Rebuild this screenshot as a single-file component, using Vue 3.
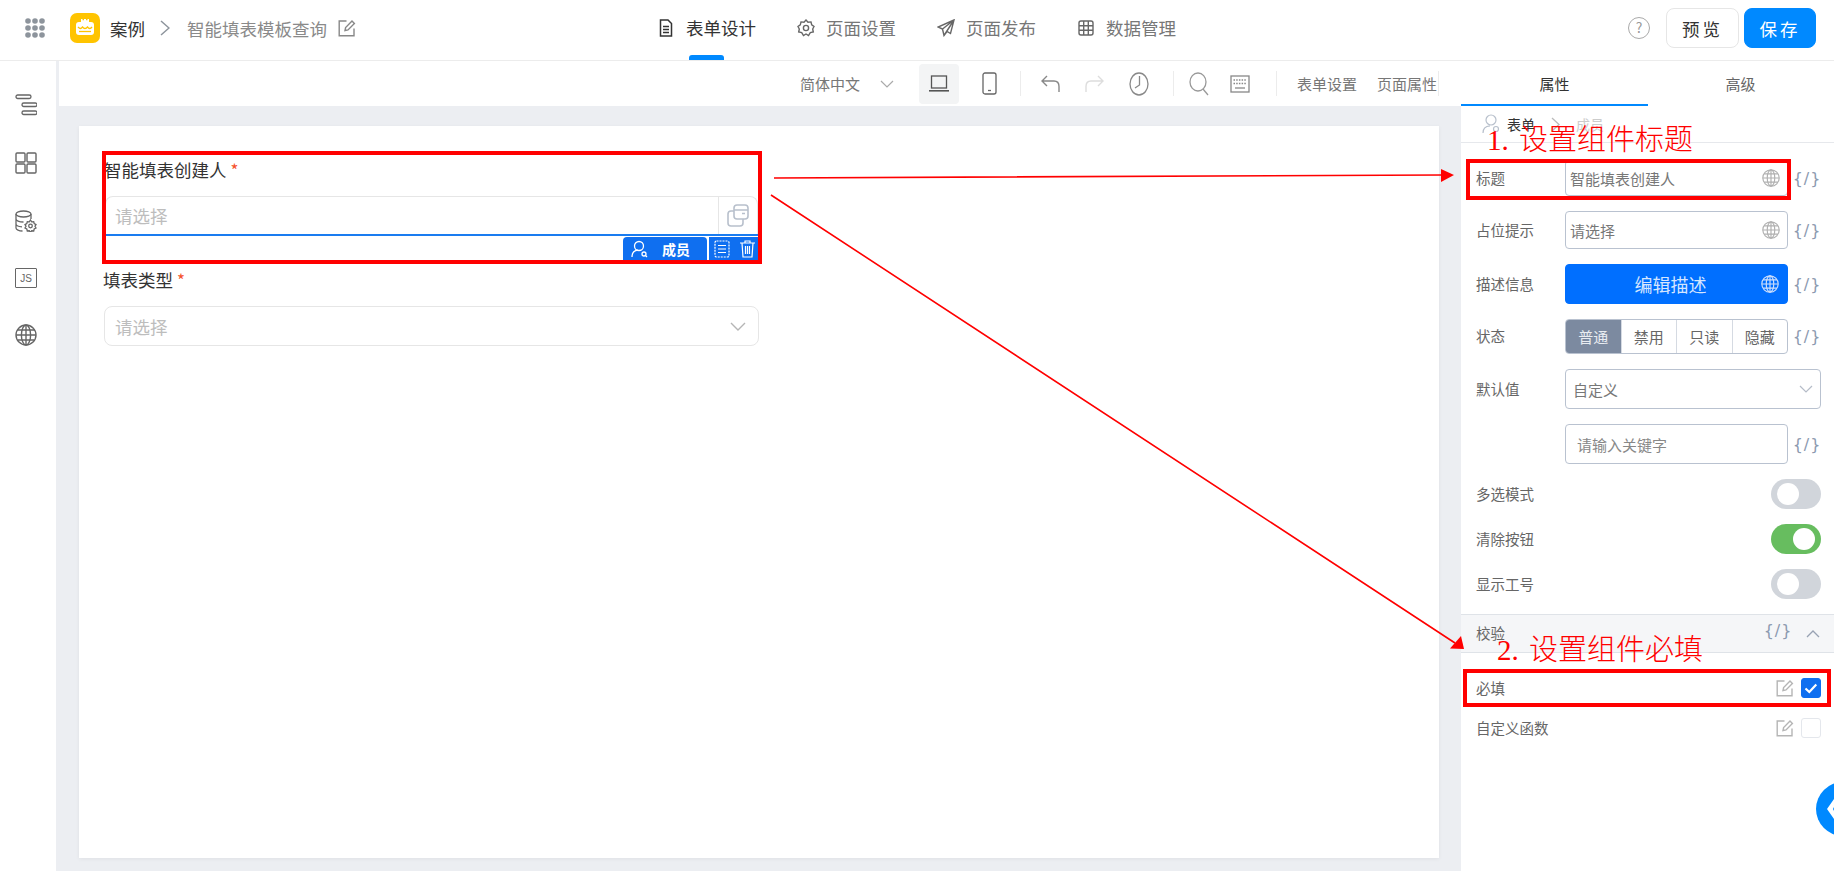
<script setup>
const toggles = [
  { label: '多选模式', on: false },
  { label: '清除按钮', on: true },
  { label: '显示工号', on: false },
]
const segs = ['普通', '禁用', '只读', '隐藏']
</script>

<template>
  <div class="app">
    <svg class="defs" width="0" height="0">
      <defs>
        <symbol id="globe" viewBox="0 0 22 22">
          <g fill="none" stroke="currentColor" stroke-width="1.4">
            <circle cx="11" cy="11" r="10" />
            <ellipse cx="11" cy="11" rx="4.6" ry="10" />
            <path d="M11 1v20M1 11h20M2.6 6h16.8M2.6 16h16.8" />
          </g>
        </symbol>
        <symbol id="edit" viewBox="0 0 18 18">
          <g fill="none" stroke="currentColor" stroke-width="1.4">
            <path d="M8.5 2H1.2v14.8H16V9.5" />
            <path d="M7 11.5l.6-3L14 2l2.4 2.4-6.4 6.5z" />
          </g>
        </symbol>
      </defs>
    </svg>

    <header class="topbar">
      <div class="h-left">
        <svg class="dots" width="20" height="20" viewBox="0 0 20 20" fill="#8d949c">
          <circle cx="3" cy="3" r="2.8" /><circle cx="10" cy="3" r="2.8" /><circle cx="17" cy="3" r="2.8" />
          <circle cx="3" cy="10" r="2.8" /><circle cx="10" cy="10" r="2.8" /><circle cx="17" cy="10" r="2.8" />
          <circle cx="3" cy="17" r="2.8" /><circle cx="10" cy="17" r="2.8" /><circle cx="17" cy="17" r="2.8" />
        </svg>
        <div class="logo">
          <svg width="30" height="30" viewBox="0 0 30 30">
            <path d="M11 9V6h1.500v1.200H14V6h2v1.200h1.500V6H19v3z" fill="#fff" />
            <rect x="6" y="9" width="18" height="13" rx="3" fill="#fff" />
            <path d="M8 14c2 2 3 2 4.500 0 1.500 2 3.500 2 5 0 1.500 2 3 2 4.500 0" fill="none" stroke="#ffc400" stroke-width="1.300" />
            <path d="M9 18.500h12" stroke="#ffc400" stroke-width="1.300" />
          </svg>
        </div>
        <span class="app-name">案例</span>
        <svg class="crumb" width="10" height="16" viewBox="0 0 10 16"><path d="M1 1l8 7-8 7" fill="none" stroke="#8d949c" stroke-width="1.500" /></svg>
        <span class="page-name">智能填表模板查询</span>
        <svg class="page-edit" width="18" height="18" viewBox="0 0 18 18"><use href="#edit" /></svg>
      </div>

      <nav class="nav">
        <div class="nav-item active">
          <svg width="18" height="18" viewBox="0 0 18 18" fill="none" stroke="#333" stroke-width="1.500"><path d="M3.500 1h7.500l3.500 3.500V17h-11zM6 7.500h6M6 10.500h6M6 13.500h6" /></svg>
          <span>表单设计</span>
          <i class="nav-line"></i>
        </div>
        <div class="nav-item">
          <svg width="18" height="18" viewBox="0 0 18 18" fill="none" stroke="#666" stroke-width="1.400"><path d="M9 1l2 2.200 3-.3.700 2.900 2.300 1.700L15.700 10l.6 3-3 .6L11.500 16.500 9 15l-2.500 1.500-1.800-2.900-3-.6.600-3L1 7.500l2.300-1.700L4 2.900l3 .3z" /><circle cx="9" cy="9" r="2.600" /></svg>
          <span>页面设置</span>
        </div>
        <div class="nav-item">
          <svg width="18" height="18" viewBox="0 0 18 18" fill="none" stroke="#666" stroke-width="1.400"><path d="M17 1L1 8l4.500 2L7 16.500l3-4 3.500 2zM5.500 10L17 1 7 16.500" /></svg>
          <span>页面发布</span>
        </div>
        <div class="nav-item">
          <svg width="18" height="18" viewBox="0 0 18 18" fill="none" stroke="#666" stroke-width="1.400"><rect x="2" y="2" width="14" height="14" rx="2" /><path d="M2 6.700h14M2 11.300h14M6.700 2v14M11.300 2v14" /></svg>
          <span>数据管理</span>
        </div>
      </nav>

      <div class="h-right">
        <div class="help">?</div>
        <button class="btn">预览</button>
        <button class="btn primary">保存</button>
      </div>
    </header>

    <div class="body">
      <aside class="sidebar">
        <svg width="22" height="22" viewBox="0 0 22 22" fill="none" stroke="#666" stroke-width="1.300">
          <rect x="1" y="1" width="15" height="3.500" rx="1.700" />
          <rect x="7" y="9" width="15" height="3.500" rx="1.700" />
          <rect x="7" y="17" width="15" height="3.500" rx="1.700" />
        </svg>
        <svg width="22" height="22" viewBox="0 0 22 22" fill="none" stroke="#666" stroke-width="1.400">
          <rect x="1" y="1" width="9" height="9" rx="1" /><rect x="12" y="1" width="9" height="9" rx="1" />
          <rect x="1" y="12" width="9" height="9" rx="1" /><rect x="12" y="12" width="9" height="9" rx="1" />
        </svg>
        <svg width="22" height="22" viewBox="0 0 22 22" fill="none" stroke="#666" stroke-width="1.300">
          <ellipse cx="8.500" cy="4" rx="7.500" ry="3" />
          <path d="M1 4v14c0 1.600 3 3 6.500 3M16 4v5M1 9c0 1.500 3 3 7.500 3M1 14c0 1.500 3 2.600 6 2.800" />
          <path d="M15.500 10l1.200 1.800 2-.2.500 2 1.800 1-1 1.700 1 1.700-1.800 1-.5 2-2-.2-1.200 1.500-1.200-1.500-2 .2-.5-2-1.800-1 1-1.700-1-1.700 1.800-1 .5-2 2 .2z" />
          <circle cx="15.500" cy="16" r="1.800" />
        </svg>
        <div class="js"><span>JS</span></div>
        <svg class="side-globe" width="22" height="22" viewBox="0 0 22 22"><use href="#globe" /></svg>
      </aside>

      <main class="center">
        <div class="toolbar">
          <span class="tool-text">简体中文</span>
          <svg class="m20" width="14" height="8" viewBox="0 0 14 8"><path d="M1 1l6 6 6-6" fill="none" stroke="#aaa" stroke-width="1.200" /></svg>
          <div class="tool on m25">
            <svg width="20" height="17" viewBox="0 0 20 17" fill="none" stroke="#555" stroke-width="1.300"><rect x="2.500" y="1" width="15" height="12" /><path d="M0 15.800h20" stroke-width="1.600" /></svg>
          </div>
          <div class="tool m10">
            <svg width="15" height="23" viewBox="0 0 15 23" fill="none" stroke="#666" stroke-width="1.300"><rect x="1" y="1" width="13" height="21" rx="2" /><path d="M6 18.500h3" /></svg>
          </div>
          <i class="tool-sep m11"></i>
          <div class="tool m10">
            <svg width="20" height="18" viewBox="0 0 20 18" fill="none" stroke="#888" stroke-width="1.400"><path d="M6 1L1 6l5 5M1 6h12c3.500 0 5 2.500 5 5.500V17" /></svg>
          </div>
          <div class="tool m3">
            <svg width="20" height="18" viewBox="0 0 20 18" fill="none" stroke="#ddd" stroke-width="1.400"><path d="M14 1l5 5-5 5M19 6H7c-3.500 0-5 2.500-5 5.500V17" /></svg>
          </div>
          <div class="tool m5">
            <svg width="20" height="24" viewBox="0 0 20 24" fill="none" stroke="#888" stroke-width="1.300"><ellipse cx="10" cy="12" rx="9" ry="11" /><path d="M10.500 4v9L6 16" /></svg>
          </div>
          <i class="tool-sep m14"></i>
          <div class="tool m5">
            <svg width="20" height="24" viewBox="0 0 20 24" fill="none" stroke="#999" stroke-width="1.300"><ellipse cx="9" cy="10" rx="8" ry="9" /><path d="M14 17l5 6" /></svg>
          </div>
          <div class="tool m1">
            <svg width="20" height="18" viewBox="0 0 20 18" fill="none" stroke="#888" stroke-width="1.300"><rect x="1" y="1" width="18" height="16" /><path d="M3.500 5h13M3.500 8.500h13" stroke-dasharray="1.500 1.200" /><path d="M5 13h10" /></svg>
          </div>
          <i class="tool-sep m16"></i>
          <span class="tool-text m20">表单设置</span>
          <span class="tool-text m20">页面属性</span>
          <i class="tool-sep m1"></i>
        </div>

        <div class="canvas">
          <div class="paper">
            <div class="field selected">
              <div class="f-label">智能填表创建人 <b>*</b></div>
              <div class="f-input member">
                <span>请选择</span>
                <div class="addon">
                  <svg width="22" height="23" viewBox="0 0 22 23" fill="none" stroke="#b8c0cc" stroke-width="1.600">
                    <rect x="7" y="1" width="14" height="14" rx="3" />
                    <path d="M7 6h14M15 9.500h3" />
                    <path d="M7 7H4a3 3 0 0 0-3 3v9a3 3 0 0 0 3 3h9a3 3 0 0 0 3-3v-4" />
                  </svg>
                </div>
              </div>
              <div class="field-tools">
                <div class="badge">
                  <svg width="17" height="18" viewBox="0 0 17 18" fill="none" stroke="#fff" stroke-width="1.300"><circle cx="8" cy="6" r="4.500" /><path d="M1 17c0-4 2.500-6.500 6-6.800" /><circle cx="13" cy="14" r="2" /><path d="M14.500 15.500L16 17" /></svg>
                  <span>成员</span>
                </div>
                <div class="tool-icons">
                  <svg width="16" height="18" viewBox="0 0 16 18" fill="none" stroke="#fff" stroke-width="1.200"><rect x="1" y="1" width="14" height="16" rx="1.500" stroke-dasharray="2 1" /><path d="M4 5.500h8M4 9h8M4 12.500h8" /></svg>
                  <svg width="15" height="18" viewBox="0 0 15 18" fill="none" stroke="#fff" stroke-width="1.200"><path d="M0 3h15M5 3V1h5v2M2 3l1 14h9l1-14M5.500 6v8M7.500 6v8M9.500 6v8" /></svg>
                </div>
              </div>
            </div>

            <div class="field second">
              <div class="f-label">填表类型 <b>*</b></div>
              <div class="f-input select">
                <span>请选择</span>
                <svg width="16" height="9" viewBox="0 0 16 9"><path d="M1 1l7 7 7-7" fill="none" stroke="#b5b5b5" stroke-width="1.400" /></svg>
              </div>
            </div>
          </div>
        </div>
      </main>

      <aside class="panel">
        <div class="tabs">
          <div class="tab active">属性</div>
          <div class="tab">高级</div>
        </div>
        <div class="p-crumb">
          <svg width="18" height="20" viewBox="0 0 18 20" fill="none" stroke="#b8c0cc" stroke-width="1.200"><circle cx="9" cy="6" r="5" /><path d="M1 19c0-4.500 3-7 7-7.200" /><circle cx="14" cy="15" r="2.500" /></svg>
          <span class="c1">表单</span>
          <svg width="9" height="15" viewBox="0 0 9 15"><path d="M1 1l7 6.500-7 6.500" fill="none" stroke="#bbb" stroke-width="1.300" /></svg>
          <span class="c2">成员</span>
        </div>

        <div class="props">
          <div class="prow r36">
            <label>标题</label>
            <div class="ctrl"><span class="val">智能填表创建人</span><svg class="g" width="18" height="18"><use href="#globe" /></svg></div>
            <span class="code">{/}</span>
          </div>
          <div class="prow r38">
            <label>占位提示</label>
            <div class="ctrl"><span class="val">请选择</span><svg class="g" width="18" height="18"><use href="#globe" /></svg></div>
            <span class="code">{/}</span>
          </div>
          <div class="prow r40">
            <label>描述信息</label>
            <div class="ctrl blue"><span>编辑描述</span><svg class="g" width="18" height="18"><use href="#globe" /></svg></div>
            <span class="code">{/}</span>
          </div>
          <div class="prow r35">
            <label>状态</label>
            <div class="segs">
              <span v-for="(s, i) in segs" :key="s" class="seg" :class="{ active: i === 0 }">{{ s }}</span>
            </div>
            <span class="code">{/}</span>
          </div>
          <div class="prow r40">
            <label>默认值</label>
            <div class="ctrl wide"><span class="val">自定义</span><svg width="14" height="8" viewBox="0 0 14 8"><path d="M1 1l6 6 6-6" fill="none" stroke="#b5bcc8" stroke-width="1.200" /></svg></div>
          </div>
          <div class="prow r40">
            <label></label>
            <div class="ctrl"><span class="val kw">请输入关键字</span></div>
            <span class="code">{/}</span>
          </div>
          <div v-for="t in toggles" :key="t.label" class="prow r30 between">
            <label>{{ t.label }}</label>
            <div class="switch" :class="{ on: t.on }"><i></i></div>
          </div>
        </div>

        <div class="sec">
          <span class="sec-title">校验</span>
          <span class="code sec-code">{/}</span>
          <svg width="14" height="8" viewBox="0 0 14 8"><path d="M1 7l6-6 6 6" fill="none" stroke="#98a2b3" stroke-width="1.300" /></svg>
        </div>
        <div class="checks">
          <div class="crow">
            <label>必填</label>
            <svg class="e" width="18" height="18"><use href="#edit" /></svg>
            <div class="cb on"><svg width="14" height="11" viewBox="0 0 14 11"><path d="M1.500 5.500l3.800 3.500 7-7.500" fill="none" stroke="#fff" stroke-width="2.200" /></svg></div>
          </div>
          <div class="crow">
            <label>自定义函数</label>
            <svg class="e" width="18" height="18"><use href="#edit" /></svg>
            <div class="cb"></div>
          </div>
        </div>
        <div class="float">
          <svg width="12" height="22" viewBox="0 0 12 22"><path d="M8 1L1 11l7 10 3-2-4-8 4-8z" fill="#fff" /></svg>
        </div>
      </aside>
    </div>

    <!-- annotations drawn over the screenshot -->
    <div class="mark m-a"></div>
    <div class="mark m-b"></div>
    <div class="mark m-c"></div>
    <div class="note n-a">1. 设置组件标题</div>
    <div class="note n-b">2. 设置组件必填</div>
    <svg class="arrows" width="1834" height="871" viewBox="0 0 1834 871">
      <path d="M774 178L1442 175M771 195L1455 643" stroke="#f00" stroke-width="1.600" fill="none" />
      <path d="M1454 175L1441 169V182z" fill="#f00" />
      <path d="M1464 649L1450 648.500L1461 636z" fill="#f00" />
    </svg>
  </div>
</template>

<style scoped>
.app {
  position: relative;
  width: 1834px;
  height: 871px;
  overflow: hidden;
  display: flex;
  flex-direction: column;
  background: #fff;
  color: #333;
  font-family: "Noto Sans CJK SC", "Noto Sans", sans-serif;
}
.defs { position: absolute; }
.topbar {
  height: 61px;
  flex: none;
  display: flex;
  align-items: center;
  border-bottom: 1px solid #ececec;
  box-sizing: border-box;
  padding-bottom: 4px;
}
.h-left {
  width: 657px;
  flex: none;
  display: flex;
  align-items: center;
  padding-left: 25px;
  box-sizing: border-box;
}
.logo {
  width: 30px;
  height: 30px;
  margin-left: 25px;
  background: #ffc400;
  border-radius: 7px;
  display: flex;
}
.app-name { margin-left: 10px; font-size: 17.5px; color: #333; }
.crumb { margin-left: 15px; }
.page-name { margin-left: 17px; font-size: 17.5px; color: #8a8a8a; }
.page-edit { margin-left: 11px; color: #888; }
.nav { display: flex; gap: 41px; height: 100%; }
.nav-item {
  position: relative;
  display: flex;
  align-items: center;
  gap: 11px;
  font-size: 17.5px;
  color: #777;
  line-height: 56px;
}
.nav-item.active { color: #333; }
.nav-line {
  position: absolute;
  left: 32px;
  top: 55px;
  width: 35px;
  height: 5px;
  border-radius: 3px 3px 0 0;
  background: #0089ff;
}
.h-right {
  margin-left: auto;
  display: flex;
  align-items: center;
  padding-right: 18px;
  gap: 5px;
}
.help {
  width: 22px;
  height: 22px;
  box-sizing: border-box;
  border: 1.500px solid #aaa;
  border-radius: 50%;
  color: #999;
  font-size: 14px;
  line-height: 19px;
  text-align: center;
  margin-right: 11px;
}
.btn {
  width: 73px;
  height: 40px;
  box-sizing: border-box;
  border: 1px solid #e6e6e6;
  border-radius: 8px;
  background: #fff;
  color: #333;
  font: 17.5px "Noto Sans CJK SC", sans-serif;
  letter-spacing: 3px;
  padding: 0;
}
.btn.primary { width: 72px; background: #0089ff; border-color: #0089ff; color: #fff; }

.body { flex: 1; display: flex; min-height: 0; }
.sidebar {
  width: 56px;
  flex: none;
  box-sizing: border-box;
  padding: 33px 0 0 15px;
  display: flex;
  flex-direction: column;
  align-items: flex-start;
  gap: 36px;
  background: #fff;
}
.js {
  width: 22px;
  height: 20px;
  box-sizing: border-box;
  border: 1.500px solid #666;
  border-radius: 1px;
  display: flex;
  align-items: center;
  justify-content: center;
}
.js span { font: 10px "Liberation Sans", sans-serif; color: #666; }
.side-globe { color: #666; }

.center {
  flex: 1;
  min-width: 0;
  background: #eceef2;
  padding-left: 3px;
  display: flex;
  flex-direction: column;
}
.toolbar {
  height: 45px;
  flex: none;
  background: #fff;
  display: flex;
  align-items: center;
  padding-left: 741px;
}
.tool-text { font-size: 15px; color: #777; white-space: nowrap; }
.tool {
  width: 40px;
  height: 40px;
  flex: none;
  display: flex;
  align-items: center;
  justify-content: center;
  border-radius: 4px;
}
.tool.on { background: #f3f4f5; }
.tool-sep { width: 1px; height: 25px; flex: none; background: #ececec; }
.m1 { margin-left: 1px; }
.m3 { margin-left: 3px; }
.m5 { margin-left: 5px; }
.m10 { margin-left: 10px; }
.m11 { margin-left: 11px; }
.m14 { margin-left: 14px; }
.m16 { margin-left: 16px; }
.m20 { margin-left: 20px; }
.m25 { margin-left: 25px; }

.canvas { flex: 1; min-height: 0; padding: 20px 22px 13px 20px; display: flex; }
.paper {
  flex: 1;
  background: #fff;
  box-shadow: 0 1px 4px rgba(0, 0, 0, 0.06);
  padding: 32px 0 0 25px;
}
.field { width: 655px; position: relative; }
.field.selected {
  height: 78px;
  box-sizing: border-box;
  border-left: 1px solid #0089ff;
  border-right: 1px solid #0089ff;
  border-bottom: 2px solid #1a7cf0;
}
.field.second { margin-top: 32px; }
.f-label { height: 24px; line-height: 24px; font-size: 17.5px; color: #333; margin: 0 0 14px -1px; white-space: nowrap; }
.f-label b { font-weight: 400; color: #f5512c; font-size: 17px; }
.f-input {
  box-sizing: border-box;
  height: 40px;
  border: 1px solid #e6e6e6;
  border-radius: 8px;
  font-size: 17.5px;
  color: #bdbdbd;
  display: flex;
  align-items: center;
  justify-content: space-between;
  padding-left: 10px;
}
.f-input.member { height: 38px; border-bottom: 0; border-radius: 8px 8px 0 0; padding: 0 0 0 9px; }
.f-input.select { padding-right: 12px; }
.addon {
  width: 38px;
  height: 100%;
  border-left: 1px solid #e6e6e6;
  display: flex;
  align-items: center;
  justify-content: center;
}
.field-tools {
  position: absolute;
  right: 0;
  top: 79px;
  height: 24px;
  display: flex;
  gap: 2px;
}
.badge {
  width: 84px;
  display: flex;
  align-items: center;
  gap: 14px;
  padding-left: 8px;
  box-sizing: border-box;
  background: #0f6ff0;
  border-radius: 4px 4px 0 0;
  color: #fff;
  font-size: 14px;
  font-weight: 700;
}
.tool-icons {
  width: 49px;
  box-sizing: border-box;
  background: #0f6ff0;
  display: flex;
  align-items: center;
  gap: 10px;
  padding-left: 5px;
}

.panel {
  width: 373px;
  flex: none;
  background: #fff;
  position: relative;
  overflow: hidden;
}
.tabs { height: 45px; display: flex; }
.tab { flex: 1; text-align: center; font-size: 15px; line-height: 45px; color: #666; }
.tab.active { color: #333; border-bottom: 2px solid #0089ff; height: 45px; box-sizing: border-box; margin-right: -1px; }
.p-crumb {
  height: 37px;
  box-sizing: border-box;
  border-bottom: 1px solid #e6e8ec;
  display: flex;
  align-items: center;
  padding-left: 21px;
  font-size: 14px;
}
.p-crumb .c1 { margin-left: 7px; color: #333; }
.p-crumb svg + .c1 + svg { margin-left: 16px; }
.p-crumb .c2 { margin-left: 16px; color: #ccc; }
.props {
  padding: 17px 13px 0 15px;
  display: flex;
  flex-direction: column;
  gap: 15px;
}
.prow { display: flex; align-items: center; }
.r30 { height: 30px; }
.r35 { height: 35px; }
.r36 { height: 36px; }
.r38 { height: 38px; }
.r40 { height: 40px; }
.between { justify-content: space-between; }
.prow label { width: 89px; flex: none; font-size: 14.5px; color: #666; padding-bottom: 2px; }
.ctrl {
  width: 223px;
  height: 100%;
  flex: none;
  box-sizing: border-box;
  border: 1px solid #b9c2d0;
  border-radius: 4px;
  display: flex;
  align-items: center;
  justify-content: space-between;
  padding: 0 7px 0 4px;
  font-size: 15px;
  color: #777;
}
.ctrl.wide { width: 256px; padding-left: 7px; padding-right: 7px; }
.ctrl .kw { padding-left: 7px; color: #888; }
.ctrl .g { color: #b0b0b0; flex: none; }
.ctrl.blue {
  background: #006fff;
  border-color: #006fff;
  position: relative;
  justify-content: center;
  color: #d6e6ff;
  font-size: 18px;
  padding-right: 16px;
}
.ctrl.blue .g { position: absolute; right: 8px; color: #cfe0fb; }
.code {
  width: 38px;
  text-align: center;
  flex: none;
  font: 16px "DejaVu Sans", sans-serif;
  letter-spacing: 1px;
  color: #8c9ab0;
}
.segs {
  width: 223px;
  height: 100%;
  box-sizing: border-box;
  border: 1px solid #b9c2d0;
  border-radius: 4px;
  display: flex;
  overflow: hidden;
  flex: none;
}
.seg {
  flex: 1;
  text-align: center;
  font-size: 15px;
  line-height: 33px;
  color: #666;
  border-left: 1px solid #d5dae2;
}
.seg:first-child { border-left: 0; }
.seg.active { background: #7c8aa0; color: #e8ecf1; }
.switch {
  width: 50px;
  height: 30px;
  border-radius: 15px;
  background: #d1d5db;
  display: flex;
  align-items: center;
  padding: 0 6px;
  box-sizing: border-box;
}
.switch i { width: 22px; height: 22px; border-radius: 50%; background: #fff; }
.switch.on { background: #67bd5f; justify-content: flex-end; }
.sec {
  margin-top: 15px;
  height: 39px;
  box-sizing: border-box;
  background: #f5f6f8;
  border-top: 1px solid #dfe3e8;
  border-bottom: 1px solid #dfe3e8;
  display: flex;
  align-items: center;
  padding: 0 14px 0 15px;
  font-size: 14.5px;
  color: #666;
}
.sec-title { padding-bottom: 2px; }
.sec-code { margin-left: auto; margin-right: 9px; margin-top: -7px; }
.checks { padding: 15px 13px 0 15px; }
.crow { height: 40px; display: flex; align-items: center; }
.crow label { font-size: 14.5px; color: #666; margin-right: auto; padding-bottom: 2px; }
.crow .e { color: #b5b5b5; }
.cb {
  width: 20px;
  height: 20px;
  margin-left: 7px;
  box-sizing: border-box;
  border: 1px solid #e4e7ec;
  border-radius: 3px;
  display: flex;
  align-items: center;
  justify-content: center;
}
.cb.on { background: #0f6ff0; border-color: #0f6ff0; }
.float {
  position: absolute;
  left: 355px;
  top: 721px;
  width: 54px;
  height: 54px;
  border-radius: 50%;
  background: #0089ff;
  display: flex;
  align-items: center;
  padding-left: 10px;
  box-sizing: border-box;
}
.mark {
  position: absolute;
  box-sizing: border-box;
  border: 4px solid #f00;
  pointer-events: none;
}
.m-a { left: 102px; top: 151px; width: 660px; height: 113px; }
.m-b { left: 1466px; top: 159px; width: 325px; height: 41px; }
.m-c { left: 1463px; top: 669px; width: 368px; height: 38px; }
.note {
  position: absolute;
  font-size: 29px;
  line-height: 40px;
  font-weight: 300;
  color: #f00;
  white-space: nowrap;
  word-spacing: 3px;
  font-family: "Liberation Serif", "Noto Sans CJK SC", serif;
}
.n-a { left: 1487px; top: 120px; }
.n-b { left: 1497px; top: 630px; }
.arrows { position: absolute; left: 0; top: 0; pointer-events: none; }
</style>
